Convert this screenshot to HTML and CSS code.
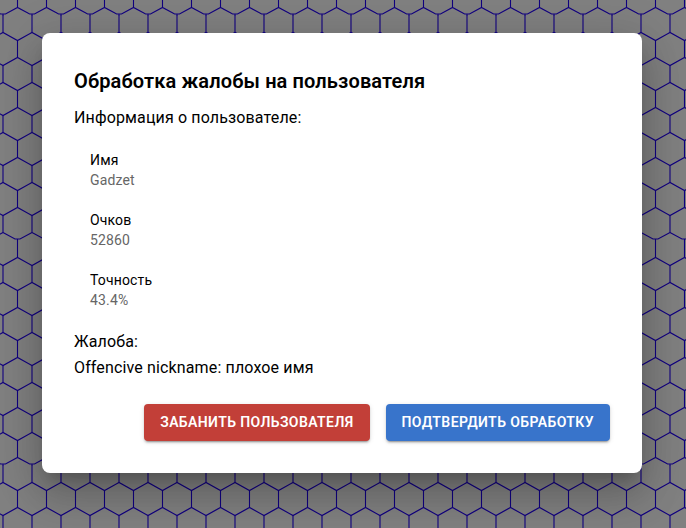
FILE: index.html
```html
<!DOCTYPE html>
<html lang="ru">
<head>
<meta charset="utf-8">
<title>Обработка жалобы</title>
<link rel="stylesheet" href="styles.css">
</head>
<body>
<svg class="backdrop" aria-hidden="true">
  <defs>
    <path id="a" d="M-11.5 7.5L3 15.5L17.5 7.5L32 15.5"/>
    <path id="b" d="M-11.5 40.5L3 32.5L17.5 40.5L32 32.5"/>
    <path id="v" d="M3 15.5V32.5M17.5 40.5V57.5"/>
    <pattern id="hex" width="29" height="450" patternUnits="userSpaceOnUse">
      <g class="grid">
        <path d="M-11.5 7.5L.5 14H5.5L17.5 7.5L29.5 14H32M3 14V16M17.5 0V7.5"/>
        <use href="#b"/><use href="#v"/>
        <use href="#a" y="50"/><use href="#b" y="50"/><use href="#v" y="50"/>
        <use href="#a" y="100"/><use href="#b" y="100"/><use href="#v" y="100"/>
        <use href="#a" y="150"/><use href="#b" y="150"/><use href="#v" y="150"/>
        <use href="#a" y="200"/><use href="#v" y="200"/>
        <path d="M3 232.5L15 239H20L32 232.5M-11.5 239H-9L3 232.5M17.5 239V241"/>
        <use href="#a" y="250"/><use href="#b" y="250"/><use href="#v" y="250"/>
        <use href="#a" y="300"/><use href="#b" y="300"/><use href="#v" y="300"/>
        <use href="#a" y="350"/><use href="#b" y="350"/><use href="#v" y="350"/>
        <use href="#a" y="400"/><use href="#b" y="400"/><use href="#v" y="400"/>
      </g>
    </pattern>
  </defs>
  <rect width="100%" height="100%" fill="url(#hex)"/>
</svg>
<main class="dialog">
  <h2 class="title">Обработка жалобы на пользователя</h2>
  <p class="text intro">Информация о пользователе:</p>
  <dl class="list">
    <div class="item"><dt>Имя</dt><dd>Gadzet</dd></div>
    <div class="item"><dt>Очков</dt><dd>52860</dd></div>
    <div class="item"><dt>Точность</dt><dd>43.4%</dd></div>
  </dl>
  <p class="text">Жалоба:</p>
  <p class="text">Offencive nickname: плохое имя</p>
  <div class="actions">
    <button class="button danger">Забанить пользователя</button>
    <button class="button primary">Подтвердить обработку</button>
  </div>
</main>
</body>
</html>
```
FILE: styles.css
```css
* { box-sizing: border-box; }
body {
  margin: 0;
  height: 528px;
  padding: 33px 44px 0 42px;
  overflow: hidden;
  background: #808080;
  font-family: Roboto, sans-serif;
  color: #000;
}
.backdrop { position: absolute; inset: 0; width: 100%; height: 100%; }
.grid { fill: none; stroke: #10007f; stroke-width: 1.1; }
.dialog {
  position: relative;
  width: 600px;
  height: 440px;
  padding: 32px;
  background: #fff;
  border-radius: 8px;
  box-shadow: 0 11px 15px -7px rgba(0,0,0,.2), 0 24px 38px 3px rgba(0,0,0,.14), 0 9px 46px 8px rgba(0,0,0,.12);
}
.title { margin: 0; font-size: 20px; font-weight: 600; line-height: 32px; letter-spacing: .12px; }
.text { margin: 0; font-size: 16px; line-height: 26px; letter-spacing: .14px; }
.intro { line-height: 24px; margin-top: 9px; }
.list { margin: 0; padding: 10px 16px 0; }
.item { height: 60px; padding: 10px 0; font-size: 14px; line-height: 20px; letter-spacing: .15px; }
dd { margin: 0; color: #666; }
.list + .text { margin-top: 9px; }
.actions { display: flex; justify-content: flex-end; gap: 16px; margin-top: 23px; }
.button {
  height: 37px;
  padding: 0 16px 1px;
  border: 0;
  border-radius: 4px;
  color: #fff;
  font: 600 14px/24px Roboto, sans-serif;
  letter-spacing: .4px;
  text-transform: uppercase;
  white-space: nowrap;
  box-shadow: 0 3px 1px -2px rgba(0,0,0,.2), 0 2px 2px rgba(0,0,0,.14), 0 1px 5px rgba(0,0,0,.12);
}
.danger { background: #c23f38; }
.primary { background: #3874cb; }
```
